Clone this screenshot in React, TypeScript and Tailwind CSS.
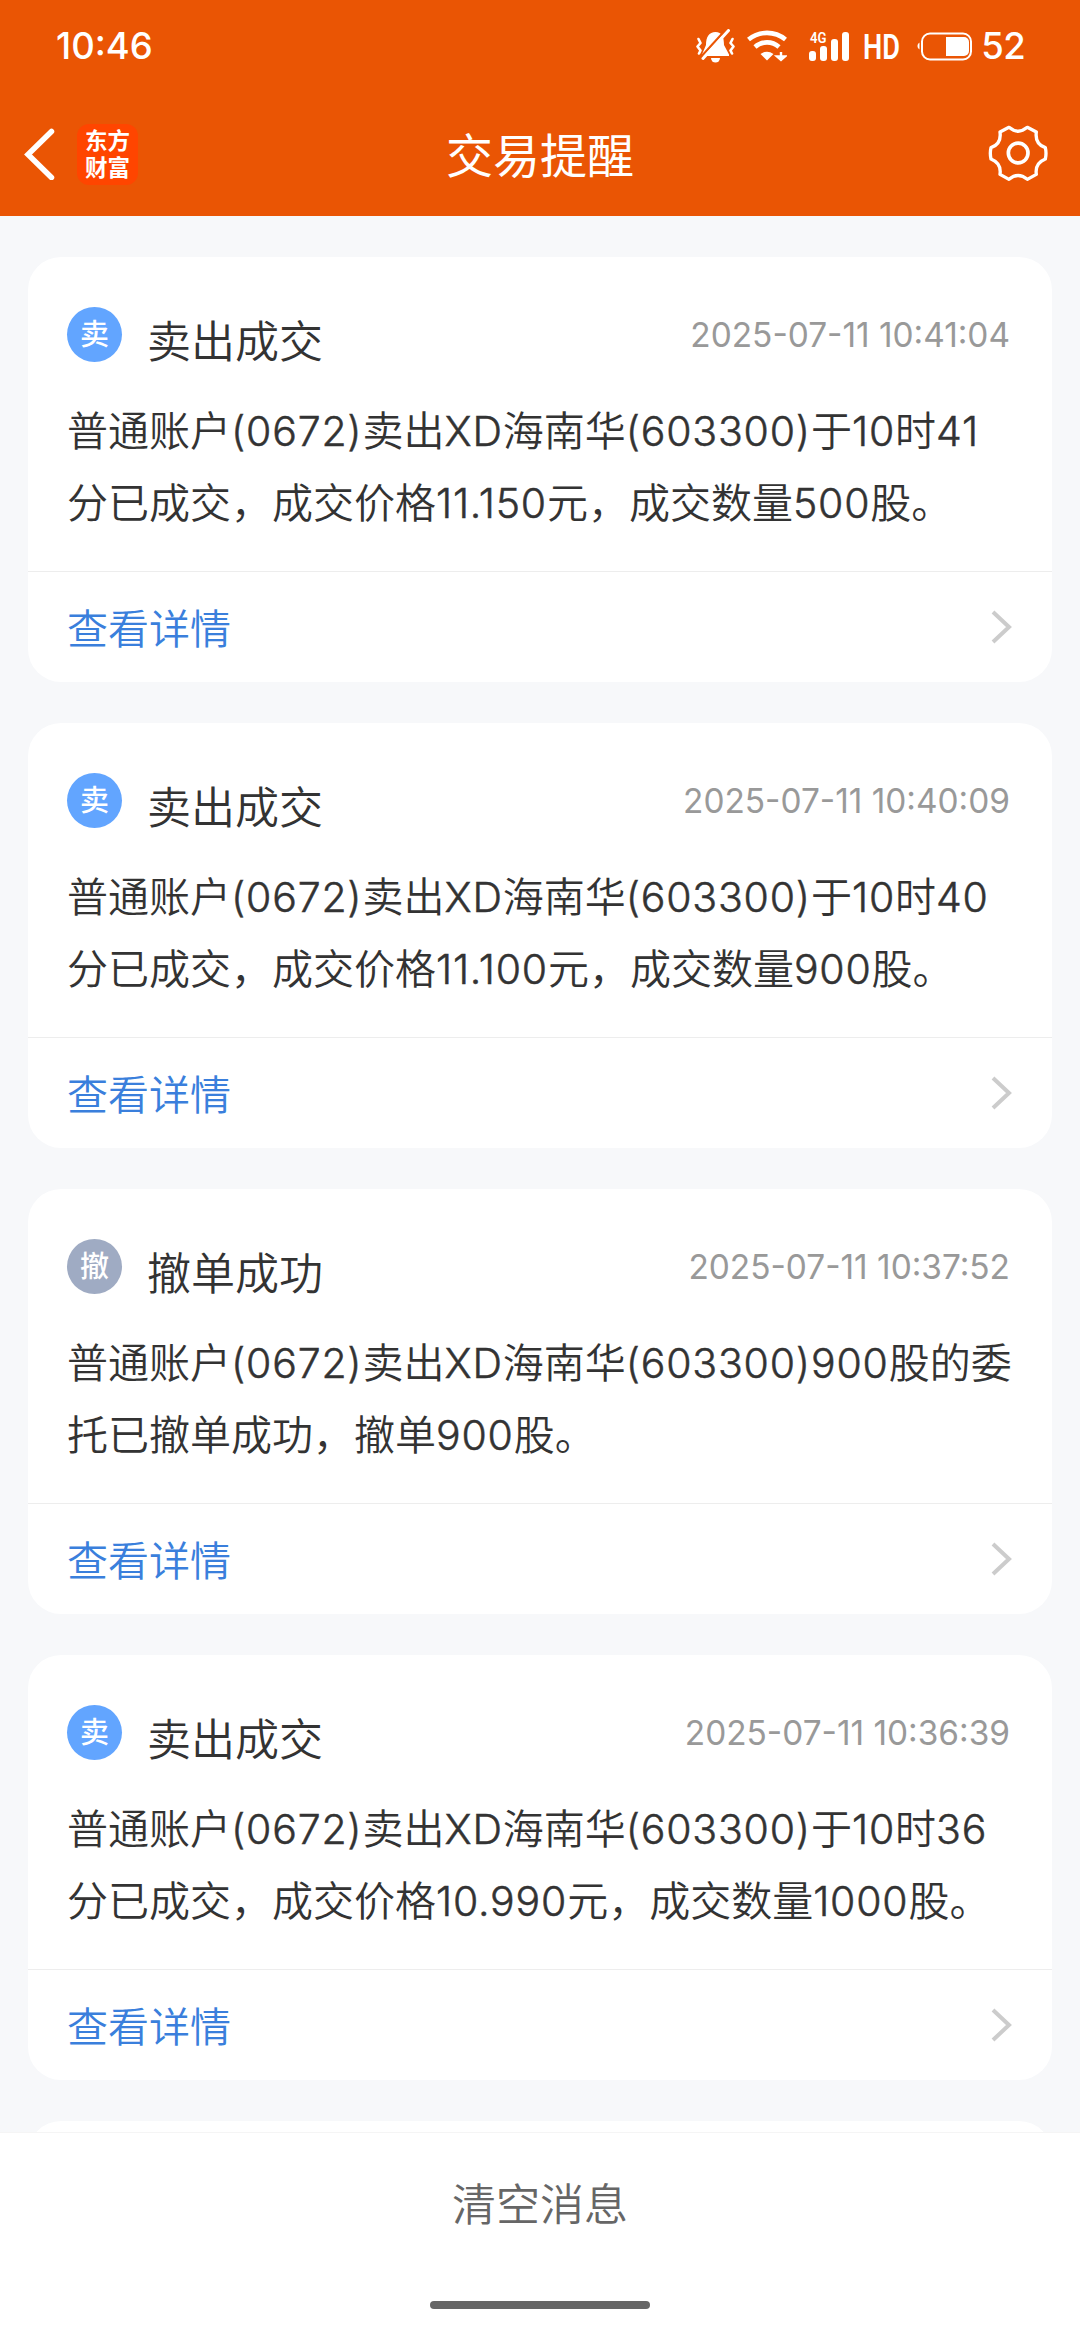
import React from "react";

interface TradeMessage {
  id: number;
  badge: string;
  title: string;
  time: string;
  lines: string[];
}

type MessageCardProps = {
  message: TradeMessage;
};

const messages: TradeMessage[] = [
  {
    id: 1,
    badge: '卖',
    title: '卖出成交',
    time: '2025-07-11 10:41:04',
    lines: ['普通账户(0672)卖出XD海南华(603300)于10时41', '分已成交，成交价格11.150元，成交数量500股。'],
  },
  {
    id: 2,
    badge: '卖',
    title: '卖出成交',
    time: '2025-07-11 10:40:09',
    lines: ['普通账户(0672)卖出XD海南华(603300)于10时40', '分已成交，成交价格11.100元，成交数量900股。'],
  },
  {
    id: 3,
    badge: '撤',
    title: '撤单成功',
    time: '2025-07-11 10:37:52',
    lines: ['普通账户(0672)卖出XD海南华(603300)900股的委', '托已撤单成功，撤单900股。'],
  },
  {
    id: 4,
    badge: '卖',
    title: '卖出成交',
    time: '2025-07-11 10:36:39',
    lines: ['普通账户(0672)卖出XD海南华(603300)于10时36', '分已成交，成交价格10.990元，成交数量1000股。'],
  },
];

const badgeColors: { [key: string]: string } = {
  '卖': 'bg-[#62a5ff]',
  '撤': 'bg-[#9fabc3]',
};


const StatusBar: React.FC = () => {
  return (
    <div className="flex h-[92px] items-center pl-[56px] pr-[55px] text-white">
      <span className="text-[36.500px] font-[450] leading-none">10:46</span>

      <div className="ml-auto flex items-center">
        {/* muted bell */}
        <svg className="h-[34px] w-[40px]" viewBox="0 0 40 34" fill="none">
          <path d="M11 16c0-8 3-13 9.500-13S29 8 29 16l5 9.500v1.500H7v-1.500z" fill="white" />
          <path d="M16 29h9a4.500 4.500 0 0 1-9 0z" fill="white" />
          <path d="M5.500 28.500L31.500 0" stroke="#ea5504" strokeWidth="2.400" />
          <path d="M8 29.500L33.500 1.500" stroke="white" strokeWidth="3" strokeLinecap="round" />
          <path d="M3.500 10l2 4-3 3.500 3 4-1.500 3M37.500 10l-2 4 3 3.500-3 4 1.500 3" stroke="white" strokeWidth="2.600" strokeLinecap="round" strokeLinejoin="round" />
        </svg>
        {/* wifi */}
        <svg className="ml-[12px] h-[34px] w-[40px]" viewBox="0 0 40 34" fill="none">
          <path d="M1.500 10.500a29 29 0 0 1 37 0" stroke="white" strokeWidth="4.600" />
          <path d="M8 18a18 18 0 0 1 24 0" stroke="white" strokeWidth="4.600" />
          <path d="M13.500 25q6.500-4.500 13 0L20 31.500z" fill="white" />
          <path d="M34 23v5M30 27.500h8l-4 3.500z" stroke="white" strokeWidth="2.400" fill="white" />
        </svg>
        {/* signal */}
        <svg className="ml-[22px] h-[34px] w-[40px]" viewBox="0 0 40 34" fill="white">
          <text x="1" y="13.500" fontSize="15" fontWeight="600" fontFamily="Roboto" textLength="16.500" lengthAdjust="spacingAndGlyphs">4G</text>
          <rect x="0" y="22" width="7" height="10" rx="3" />
          <rect x="11" y="17" width="7" height="15" rx="3" />
          <rect x="22" y="10" width="7" height="22" rx="3" />
          <rect x="33" y="3" width="7" height="29" rx="3" />
        </svg>
        <svg className="ml-[15px] h-[34px] w-[38px] overflow-visible" viewBox="0 0 38 34" fill="white">
          <text x="-1" y="29.500" fontSize="35.500" fontWeight="600" fontFamily="Roboto" textLength="37" lengthAdjust="spacingAndGlyphs">HD</text>
        </svg>
        {/* battery */}
        <svg className="ml-[15px] h-[34px] w-[56px]" viewBox="0 0 56 34" fill="none">
          <path d="M2.500 13.500a4 4 0 0 0 0 7z" fill="white" />
          <rect x="5" y="4.500" width="49" height="26" rx="8" stroke="white" strokeWidth="2" />
          <path d="M29 8h18a5 5 0 0 1 5 5v9a5 5 0 0 1-5 5H29z" fill="white" />
        </svg>
        <span className="ml-[8px] text-[36.500px] font-[450] leading-none tracking-[-0.700px]">52</span>
      </div>
    </div>
  );
};


const NavBar: React.FC = () => {
  return (
    <div className="grid h-[124px] grid-cols-3 items-center px-[24px] text-white">
      <div className="flex items-center gap-[22px]">
        <svg className="h-[52px] w-[31px]" viewBox="0 0 31 52" fill="none">
          <path d="M27.500 3.500L4 26.500l23.500 23" stroke="white" strokeWidth="5.500" strokeLinecap="round" strokeLinejoin="miter" />
        </svg>
        <div className="flex size-[61px] flex-col items-center justify-center rounded-[12px] bg-[#ff4500] text-[22.500px] font-bold leading-[27px]">
          <span>东方</span>
          <span>财富</span>
        </div>
      </div>
      <h1 className="mt-[3px] text-center text-[47px] leading-[60px]">交易提醒</h1>
      <svg className="mb-[3px] ml-auto mr-[7px] h-[60px] w-[62px]" viewBox="919 367 186 180" fill="none" stroke="white" strokeLinejoin="round">
        <path
          d="M985 380Q1012 403 1040 380L1067 394Q1062 430 1094 441Q1098 458 1094 475Q1062 488 1067 521L1040 536Q1012 513 985 536L958 521Q963 488 931 475Q927 458 931 441Q963 430 958 394Z"
          strokeWidth="10"
        />
        <circle cx="1012.500" cy="457" r="29.500" strokeWidth="11" />
      </svg>
    </div>
  );
};


// Digits and latin letters are spaced a little wider than the hanzi
const MixedText: React.FC<{ text: string }> = ({ text }) => {
  return (
    <p>
      {text.split(/([\x20-\x7e]+)/).map((part, idx) => (
        <span key={idx} className={idx % 2 === 1 ? "font-light tracking-[0.800px] [-webkit-text-stroke:0.500px_#333]" : ""}>{part}</span>
      ))}
    </p>
  );
};


const MessageCard: React.FC<MessageCardProps> = ({ message }) => {
  return (
    <div className="h-[425px] shrink-0 rounded-[33px] bg-white">
      <div className="h-[314px] px-[39px] pt-[50px]">
        <div className="flex h-[68px] items-start">
          <span className={`${badgeColors[message.badge]} flex size-[55px] items-center justify-center rounded-full text-[29px] font-medium leading-none text-white`}>
            {message.badge}
          </span>
          <span className="ml-[25px] mt-[5px] text-[44px] font-[350] leading-[60px] text-[#333]">{message.title}</span>
          <span className="ml-auto mt-[8px] mr-[3px] text-[33.400px] leading-[40px] text-[#999]">{message.time}</span>
        </div>
        <div className="mt-[20px] whitespace-nowrap text-[41px] font-[350] leading-[72px] text-[#333]">
          {message.lines.map((line) => (
            <MixedText key={line} text={line} />
          ))}
        </div>
      </div>
      <div className="flex h-[111px] items-center justify-between border-t border-[#ededed] px-[39px]">
        <span className="mt-[3px] text-[41px] font-[350] leading-[60px] text-[#3a7fdc]">查看详情</span>
        <svg className="h-[36px] w-[24px]" viewBox="0 0 24 36" fill="none">
          <path d="M4 3l16 15L4 33" stroke="#ccc" strokeWidth="4" />
        </svg>
      </div>
    </div>
  );
};


const App: React.FC = () => {
  return (
    <div className="flex h-[2340px] w-[1080px] flex-col overflow-hidden bg-[#f7f8fa] font-[Inter,'Noto_Sans_CJK_SC',sans-serif]">
      <header className="h-[216px] shrink-0 bg-[#ea5504]">
        <StatusBar />
        <NavBar />
      </header>

      <main className="flex h-[1916px] shrink-0 flex-col gap-[41px] overflow-hidden px-[28px] pt-[41px]">
        {messages.map((message) => (
          <MessageCard key={message.id} message={message} />
        ))}
        {/* next card, cut off by the footer */}
        <div className="h-[425px] shrink-0 rounded-[33px] bg-white"></div>
      </main>

      <footer className="flex grow flex-col items-center border-t border-[#f5f5f5] bg-white">
        <button className="mt-[42px] text-[44px] font-[350] leading-[60px] text-[#666]">清空消息</button>
        <div className="mt-[66px] h-[8px] w-[220px] rounded-full bg-[#666]"></div>
      </footer>
    </div>
  );
};

export default App;
